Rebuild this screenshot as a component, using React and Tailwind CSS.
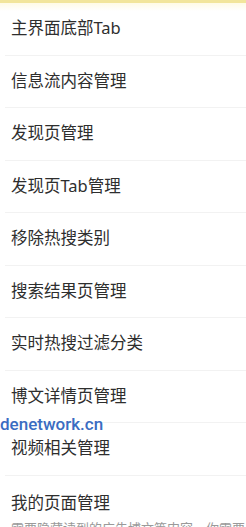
import React from "react";

const items = [
  "主界面底部Tab",
  "信息流内容管理",
  "发现页管理",
  "发现页Tab管理",
  "移除热搜类别",
  "搜索结果页管理",
  "实时热搜过滤分类",
  "博文详情页管理",
  "视频相关管理",
];

export default function App() {
  return (
    <div
      className="relative w-[246px] h-[527px] overflow-hidden bg-white"
      style={{ fontFamily: '"Noto Sans", "Noto Sans CJK SC", sans-serif' }}
    >
      <div className="h-[3px] bg-[#f2e59c]" />
      <div className="h-[8px] -mb-[8px] bg-gradient-to-b from-[#fffbe6] to-white" />
      <ul>
        {items.map((label) => (
          <li
            key={label}
            className="h-[52.5px] ml-[5px] pl-[6px] flex items-center border-b border-[#f2f2f2] text-[16.5px] text-[#2e2e2e]"
          >
            {label}
          </li>
        ))}
        <li className="ml-[5px] pl-[6px] pt-[16px] leading-[22px] text-[16.5px] text-[#2e2e2e]">
          我的页面管理
        </li>
      </ul>
      <p className="mt-[5px] px-[11px] whitespace-nowrap text-[13px] leading-[18px] text-[#9a9a9a]">
        需要隐藏读到的广告博文等内容，你需要去设置中开启
      </p>

      {/* watermark */}
      <div
        className="absolute left-0 top-[412px] text-[17px] font-medium text-[#3a6cc2]"
        style={{ fontFamily: "Roboto, sans-serif" }}
      >
        denetwork.cn
      </div>
    </div>
  );
}
